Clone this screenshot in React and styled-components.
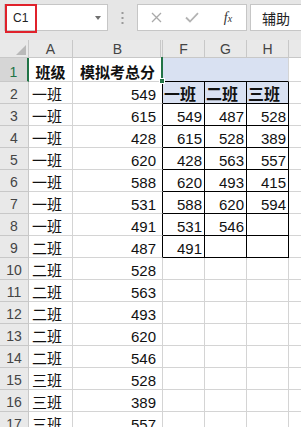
import styled, { createGlobalStyle } from "styled-components";

const GlobalStyle = createGlobalStyle`
  html, body {
    margin: 0;
    padding: 0;
    background: #fff;
    overflow: hidden;
  }
  body {
    font-family: "Liberation Sans", "Noto Sans CJK SC", sans-serif;
  }
`;

const Page = styled.div`
  width: 301px;
  height: 427px;
  overflow: hidden;
  background: #fff;
`;

/* ---------- formula bar ---------- */

const Toolbar = styled.div`
  height: 40px;
  box-sizing: border-box;
  padding: 4px 0 0 4px;
  background: #e6e6e6;
  display: flex;
  align-items: flex-start;
  overflow: hidden;
`;

const NameBox = styled.div`
  position: relative;
  width: 104px;
  height: 27px;
  box-sizing: border-box;
  border: 1px solid #c6c6c6;
  background: #fff;
  display: flex;
  align-items: center;
  padding: 0 6px 0 8px;
  font-size: 12px;
  color: #222;
`;

const RedMark = styled.div`
  position: absolute;
  left: 0;
  top: -1px;
  width: 32px;
  height: 29px;
  box-sizing: border-box;
  border: 2px solid #e0212b;
`;

const DropArrow = styled.span`
  margin-left: auto;
  width: 0;
  height: 0;
  border-left: 3.5px solid transparent;
  border-right: 3.5px solid transparent;
  border-top: 4px solid #6f6f6f;
`;

const Grip = styled.div`
  width: 29px;
  height: 27px;
  display: flex;
  align-items: center;
  justify-content: center;
`;

const FxBox = styled.div`
  width: 110px;
  height: 27px;
  box-sizing: border-box;
  border: 1px solid #c6c6c6;
  background: #fff;
  display: flex;
`;

const FxSlot = styled.div`
  flex: 1;
  display: flex;
  align-items: center;
  justify-content: center;
`;

const FxLabel = styled.span`
  font-family: "Liberation Serif", serif;
  font-style: italic;
  font-size: 14px;
  color: #333;
  & small {
    font-size: 10px;
  }
`;

const FormulaInput = styled.div`
  flex: 1;
  margin-left: 3px;
  margin-right: -4px;
  height: 27px;
  box-sizing: border-box;
  border: 1px solid #c6c6c6;
  background: #fff;
  display: flex;
  align-items: center;
  padding-left: 11px;
  font-size: 14px;
  color: #222;
`;

/* ---------- sheet ---------- */

const Sheet = styled.div`
  display: grid;
  grid-template-columns: 29px 44px 90px 42px 42px 42px 1fr;
  grid-template-rows: 18px 24px;
  grid-auto-rows: 22px;
`;

const Head = styled.div`
  position: relative;
  box-sizing: border-box;
  background: ${(p) => (p.$active ? "#d6d6d6" : "#e9e9e9")};
  border-right: ${(p) => (p.$active ? "2px solid #217346" : p.$open ? "none" : "1px solid #c8c8c8")};
  border-bottom: 1px solid #c8c8c8;
  color: ${(p) => (p.$active ? "#217346" : "#444")};
  font-size: ${(p) => (p.$row ? "14px" : "14px")};
  line-height: 16px;
  display: flex;
  align-items: ${(p) => (p.$row ? "flex-end" : "center")};
  justify-content: center;
  padding-bottom: ${(p) => (p.$row ? "1px" : "0")};

  ${(p) =>
    p.$hidden &&
    `
    &::after {
      content: "";
      position: absolute;
      right: 1px;
      top: 0;
      bottom: 0;
      width: 1px;
      background: #c8c8c8;
    }
  `}
`;

const Corner = styled(Head)`
  align-items: flex-end;
  justify-content: flex-end;
  padding: 0 2px 2px 0;
`;

const Cell = styled.div`
  position: relative;
  box-sizing: border-box;
  grid-column: ${(p) => (p.$span ? `span ${p.$span}` : "auto")};
  background: ${(p) => (p.$fill ? "#d9e1f2" : "#fff")};
  border-right: 1px solid ${(p) => (p.$edge ? "#000" : "#d4d4d4")};
  border-bottom: 1px solid ${(p) => (p.$base ? "#000" : "#d4d4d4")};
  ${(p) => p.$open && "border-right: none;"}
  display: flex;
  align-items: flex-end;
  justify-content: ${(p) =>
    p.$align === "right" ? "flex-end" : p.$align === "center" ? "center" : "flex-start"};
  padding: 0 ${(p) => p.$pr ?? 2}px 0 ${(p) => p.$pl ?? 2}px;
  font-size: ${(p) => (p.$big ? "16px" : "15px")};
  font-weight: ${(p) => (p.$bold ? 700 : 400)};
  line-height: 17px;
  color: #111;
  white-space: nowrap;

  ${(p) =>
    p.$selected &&
    `
    &::after {
      content: "";
      position: absolute;
      right: -1px;
      top: -1px;
      bottom: -1px;
      width: 2px;
      background: #217346;
      z-index: 2;
    }
    &::before {
      content: "";
      position: absolute;
      right: -3px;
      bottom: -3px;
      width: 4px;
      height: 4px;
      background: #217346;
      border: 1px solid #fff;
      z-index: 3;
    }
  `}
`;

const scores = [
  ["一班", 549],
  ["一班", 615],
  ["一班", 428],
  ["一班", 620],
  ["一班", 588],
  ["一班", 531],
  ["一班", 491],
  ["二班", 487],
  ["二班", 528],
  ["二班", 563],
  ["二班", 493],
  ["二班", 620],
  ["二班", 546],
  ["三班", 528],
  ["三班", 389],
  ["三班", 557],
];

const table = [
  ["549", "487", "528"],
  ["615", "528", "389"],
  ["428", "563", "557"],
  ["620", "493", "415"],
  ["588", "620", "594"],
  ["531", "546", ""],
  ["491", "", ""],
];

const Cross = () => (
  <svg width="11" height="11" viewBox="0 0 11 11">
    <path d="M1 1L10 10M10 1L1 10" stroke="#a9a9a9" strokeWidth="1.3" fill="none" />
  </svg>
);

const Check = () => (
  <svg width="14" height="11" viewBox="0 0 14 11">
    <path d="M1 5.5L5 9.5L13 1.2" stroke="#b3b3b3" strokeWidth="1.8" fill="none" />
  </svg>
);

const Dots = () => (
  <svg width="3" height="12" viewBox="0 0 3 12">
    <rect x="0.5" y="0" width="2" height="2" fill="#9a9a9a" />
    <rect x="0.5" y="5" width="2" height="2" fill="#9a9a9a" />
    <rect x="0.5" y="10" width="2" height="2" fill="#9a9a9a" />
  </svg>
);

const SelectAll = () => (
  <svg width="10" height="10" viewBox="0 0 10 10">
    <path d="M10 0L10 10L0 10Z" fill="#b9b9b9" />
  </svg>
);

function TableCells({ rowIndex }) {
  if (rowIndex === 0) {
    return (
      <>
        <Cell $fill $base $span={3} />
        <Cell $open />
      </>
    );
  }
  if (rowIndex === 1) {
    return (
      <>
        {["一班", "二班", "三班"].map((t) => (
          <Cell key={t} $fill $edge $base $bold $big $pl={1}>
            {t}
          </Cell>
        ))}
        <Cell $open />
      </>
    );
  }
  const vals = table[rowIndex - 2];
  if (vals) {
    return (
      <>
        {vals.map((v, i) => (
          <Cell key={i} $edge $base $align="right">
            {v}
          </Cell>
        ))}
        <Cell $open />
      </>
    );
  }
  return (
    <>
      <Cell />
      <Cell />
      <Cell />
      <Cell $open />
    </>
  );
}

export default function App() {
  const rows = [["班级", "模拟考总分"], ...scores];

  return (
    <Page>
      <GlobalStyle />
      <Toolbar>
        <NameBox>
          C1
          <RedMark />
          <DropArrow />
        </NameBox>
        <Grip>
          <Dots />
        </Grip>
        <FxBox>
          <FxSlot>
            <Cross />
          </FxSlot>
          <FxSlot>
            <Check />
          </FxSlot>
          <FxSlot>
            <FxLabel>
              f<small>x</small>
            </FxLabel>
          </FxSlot>
        </FxBox>
        <FormulaInput>辅助</FormulaInput>
      </Toolbar>

      <Sheet>
        <Corner>
          <SelectAll />
        </Corner>
        <Head>A</Head>
        <Head $hidden>B</Head>
        <Head>F</Head>
        <Head>G</Head>
        <Head>H</Head>
        <Head $open />

        {rows.map(([cls, total], i) => {
          const inTable = i >= 1 && i <= 8;
          return [
            <Head key={`h${i}`} $row $active={i === 0}>
              {i + 1}
            </Head>,
            i === 0 ? (
              <Cell key={`a${i}`} $bold $align="center">
                {cls}
              </Cell>
            ) : (
              <Cell key={`a${i}`} $pl={3}>
                {cls}
              </Cell>
            ),
            i === 0 ? (
              <Cell key={`b${i}`} $bold $align="center" $selected>
                {total}
              </Cell>
            ) : (
              <Cell key={`b${i}`} $align="right" $pr={6} $edge={inTable}>
                {total}
              </Cell>
            ),
            <TableCells key={`t${i}`} rowIndex={i} />,
          ];
        })}
      </Sheet>
    </Page>
  );
}
